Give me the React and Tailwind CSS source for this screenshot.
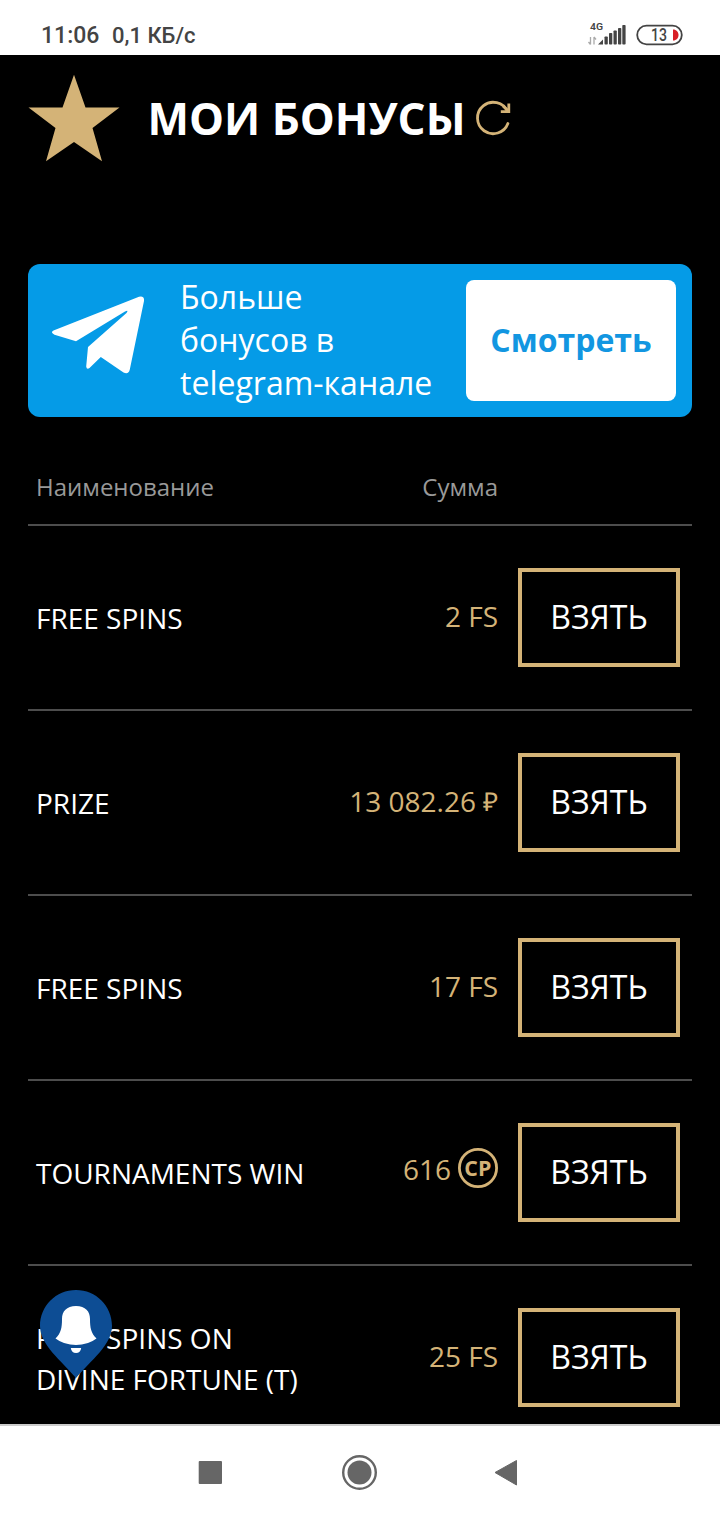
import React from 'react';

const bonuses = [
  { id: 1, name: 'FREE SPINS', amount: '2 FS' },
  { id: 2, name: 'PRIZE', amount: '13 082.26', currency: '₽' },
  { id: 3, name: 'FREE SPINS', amount: '17 FS' },
  { id: 4, name: 'TOURNAMENTS WIN', amount: '616', points: true },
  { id: 5, name: 'FREE SPINS ON DIVINE FORTUNE (T)', amount: '25 FS' },
];

const StatusBar = () => (
  <div className="flex h-[55px] shrink-0 items-start justify-between bg-white pl-[41px] pr-[37px] font-['Roboto',sans-serif] text-[#444]">
    <div className="flex items-baseline pt-[19px] leading-[34px]">
      <span className="w-[71px] text-[23px] font-medium">11:06</span>
      <span className="text-[22px] font-medium">0,1 КБ/с</span>
    </div>
    <div className="flex pt-[20px]">
      <svg width="40" height="28" viewBox="587 20 40 28" className="mr-[9px]">
        <text x="590" y="30" fontSize="9.5" fontWeight="600" textLength="13" lengthAdjust="spacingAndGlyphs" fill="#444">4G</text>
        <g fill="none" stroke="#aaa" strokeWidth="1.3">
          <path d="M590.5 37v7.5M588.5 42l2 2.5M594 44.5V37M596 39.5l-2-2.5" />
        </g>
        <g fill="#444">
          <path d="M598 44.5l5-5v5z" />
          <rect x="604.5" y="36.5" width="3.3" height="8" rx="0.8" />
          <rect x="609" y="33" width="3.3" height="11.5" rx="0.8" />
          <rect x="613.5" y="30.5" width="3.3" height="14" rx="0.8" />
          <rect x="618" y="28" width="3.3" height="16.5" rx="0.8" />
          <rect x="622.3" y="25" width="3.3" height="19.5" rx="0.8" />
        </g>
      </svg>
      <svg width="47" height="28" viewBox="636 20 47 28">
        <rect x="637.2" y="25.7" width="44.6" height="18.6" rx="9.3" fill="none" stroke="#444" strokeWidth="1.8" />
        <path d="M673 29.5c3.5 0 5.5 2.5 5.5 5.5s-2 5.5-5.5 5.5z" fill="#d81f26" />
        <text x="651" y="41" fontSize="17.5" fontWeight="500" textLength="16" lengthAdjust="spacingAndGlyphs" fill="#444">13</text>
      </svg>
    </div>
  </div>
);

const Title = () => (
  <div className="flex h-[209px] shrink-0 items-start px-7">
    <svg width="92" height="88" viewBox="28 74 92 88" className="mt-[19px]">
      <path d="M74 74.7L85.5 107.5H119.5L92.5 128L102 161.3L74 142L46 161.3L55.5 128L28.5 107.5H62.5Z" fill="#d4b377" />
    </svg>
    <h1 className="ml-[27.5px] mt-[33px] whitespace-nowrap text-[44px] font-bold leading-[60px] text-white">
      МОИ БОНУСЫ
    </h1>
    <svg width="40" height="40" viewBox="473 98 40 40" className="ml-[7.5px] mt-[43px]" fill="none" stroke="#d4b377" strokeWidth="2.8">
      <path d="M507.9 123.5A15.7 15.7 0 1 1 507.5 111.5" strokeLinecap="round" />
      <path d="M508.8 103.5V111.6H500.8" />
      <path d="M503 106l5.5 5" />
    </svg>
  </div>
);

const TelegramBanner = () => (
  <div className="mx-7 flex h-[153px] shrink-0 items-center rounded-xl bg-[#059be7] pl-6 pr-4">
    <svg width="92" height="80" viewBox="52 296 92 80" fill="#fff" className="mb-[9px]">
      <path d="M53.5 330.5L139 296.8Q144.5 295.5 144 301L129.8 369.5Q128.5 375 123.5 372.5L100.8 357L89.5 368Q86.7 370 86.2 366.5L88 347L126.5 313Q129 309.5 125 311.5L76 341.2L54.5 334.8Q50 332.5 53.5 330.5Z" />
    </svg>
    <p className="ml-9 w-[260px] pb-[2px] text-[32px] leading-[43px] text-white">
      Больше
      <br />
      бонусов в
      <br />
      telegram-канале
    </p>
    <button className="ml-auto h-[121px] w-[210px] rounded-lg bg-white pb-[2px] text-[32px] font-bold text-[#1296e1]">
      Смотреть
    </button>
  </div>
);

const PointsIcon = () => (
  <svg width="40" height="40" viewBox="0 0 40 40" className="mb-[2px] ml-[7px]">
    <circle cx="20" cy="20" r="18.6" fill="none" stroke="#d4b377" strokeWidth="2.8" />
    <text x="6.3" y="27.8" fontSize="22" fontWeight="700" textLength="27" lengthAdjust="spacingAndGlyphs" fill="#d4b377">CP</text>
  </svg>
);

const BonusRow = ({ bonus }) => (
  <div className="flex h-[185px] shrink-0 items-center border-t-2 border-[#4d4d4d] pl-2 pr-3">
    <div className="w-[280px] pt-[2px] text-[28px] leading-[41px] text-white">{bonus.name}</div>
    <div
      className={`flex flex-1 items-center justify-end whitespace-nowrap text-[28px] leading-[40px] text-[#d4b377] ${
        bonus.points ? 'pb-[7px]' : 'pb-1'
      }`}
    >
      <span>{bonus.amount}</span>
      {bonus.currency && <span className="ml-[7px] pt-px text-[26px]">{bonus.currency}</span>}
      {bonus.points && <PointsIcon />}
    </div>
    <button className="ml-5 h-[99px] w-[162px] border-4 border-[#d4b377] pb-0.5 text-[32px] text-white">
      ВЗЯТЬ
    </button>
  </div>
);

const BellPin = () => (
  <svg width="74" height="90" viewBox="39 1289 74 90" className="absolute left-[39px] top-[1234px]">
    <path d="M76 1290C96 1290 112 1306 112 1326C112 1345 91 1360 76 1378C61 1360 40 1345 40 1326C40 1306 56 1290 76 1290Z" fill="#0d4d94" />
    <path d="M76 1306C85.5 1306 90 1311.5 90 1319C90 1328 91 1333 96.5 1338.5Q88 1345 76 1345Q64 1345 55.5 1338.5C61 1333 62 1328 62 1319C62 1311.5 66.5 1306 76 1306Z" fill="#fff" />
    <path d="M70.8 1348H81.2Q80.5 1353 76 1353Q71.5 1353 70.8 1348Z" fill="#fff" />
  </svg>
);

const NavBar = () => (
  <div className="flex h-24 shrink-0 justify-center border-t-2 border-[#ccc] bg-white">
    <svg width="340" height="60" viewBox="190 1442 340 60" className="mt-4" fill="#666">
      <rect x="198.7" y="1461" width="23.3" height="23" rx="1" />
      <circle cx="359.5" cy="1472.5" r="16.3" fill="none" stroke="#666" strokeWidth="2.4" />
      <circle cx="359.5" cy="1472.5" r="12" />
      <path d="M495 1472.5L516.5 1460.5V1485Z" stroke="#666" strokeWidth="1" strokeLinejoin="round" />
    </svg>
  </div>
);

const App = () => {
  return (
    <div className="flex h-[1520px] w-[720px] flex-col overflow-hidden bg-black font-['Open_Sans',sans-serif]">
      <StatusBar />
      <main className="relative flex min-h-0 flex-1 flex-col overflow-hidden">
        <Title />
        <TelegramBanner />
        <div className="mx-7 mt-[50px] flex h-[57px] shrink-0 justify-between pl-2 pr-[194px] text-2xl leading-[40px] text-[#999]">
          <span>Наименование</span>
          <span>Сумма</span>
        </div>
        <div className="mx-7 flex flex-col">
          {bonuses.map((bonus) => (
            <BonusRow key={bonus.id} bonus={bonus} />
          ))}
        </div>
        <BellPin />
      </main>
      <NavBar />
    </div>
  );
};

export default App;
